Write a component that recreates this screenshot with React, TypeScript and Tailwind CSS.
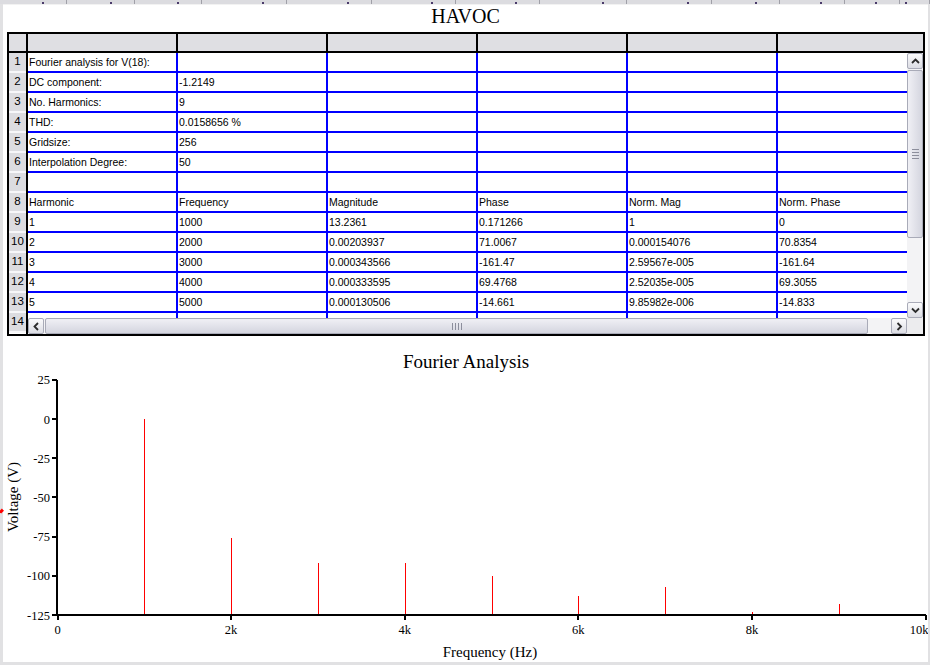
import React from "react";

// rows of the HAVOC sheet, row 14 is cut by the scrollbar
const sheet: string[][] = [
  ["Fourier analysis for V(18):"],
  ["DC component:", "-1.2149"],
  ["No. Harmonics:", "9"],
  ["THD:", "0.0158656 %"],
  ["Gridsize:", "256"],
  ["Interpolation Degree:", "50"],
  [],
  ["Harmonic", "Frequency", "Magnitude", "Phase", "Norm. Mag", "Norm. Phase"],
  ["1", "1000", "13.2361", "0.171266", "1", "0"],
  ["2", "2000", "0.00203937", "71.0067", "0.000154076", "70.8354"],
  ["3", "3000", "0.000343566", "-161.47", "2.59567e-005", "-161.64"],
  ["4", "4000", "0.000333595", "69.4768", "2.52035e-005", "69.3055"],
  ["5", "5000", "0.000130506", "-14.661", "9.85982e-006", "-14.833"],
  ["6", "6000", "2.89795e-005", "58.8081", "2.19939e-006", "58.8079"],
];

const tabWidths = [67, 68, 67, 85, 85, 84, 84, 87, 85, 68, 65, 55, 30];

// harmonic spikes: [kHz, top y in page coords]
const spikes: [number, number][] = [
  [1, 419],
  [2, 538],
  [3, 563],
  [4, 563],
  [5, 576],
  [6, 596],
  [7, 587],
  [8, 612],
  [9, 604],
];

const xOf = (k: number) => 57.5 + 86.8 * k;
const yOf = (v: number) => 419 - (v * 39.2) / 25;

function Chevron({ dir }: { dir: "up" | "down" | "left" | "right" }) {
  const pts = {
    up: "1,5 4.5,1.5 8,5",
    down: "1,1.5 4.5,5 8,1.5",
    left: "5,1 1.5,4.5 5,8",
    right: "1.5,1 5,4.5 1.5,8",
  }[dir];
  const vertical = dir === "up" || dir === "down";
  return (
    <svg width={vertical ? 9 : 7} height={vertical ? 7 : 9}>
      <polyline points={pts} fill="none" stroke="#2c2c2c" strokeWidth="1.8" />
    </svg>
  );
}

function Sheet() {
  return (
    <div className="ml-[4px] flex h-[304px] w-[918px] shrink-0 flex-col border-2 border-black font-['Liberation_Sans',Arial,sans-serif] text-[10.5px] text-black">
      {/* column header row */}
      <div className="flex h-[19px] shrink-0 border-b-2 border-black bg-[#dfdfe3]">
        <div className="w-[19px] shrink-0 border-r-2 border-black" />
        <div className="w-[150px] shrink-0 border-r-2 border-black" />
        <div className="w-[150px] shrink-0 border-r-2 border-black" />
        <div className="w-[150px] shrink-0 border-r-2 border-black" />
        <div className="w-[150px] shrink-0 border-r-2 border-black" />
        <div className="w-[150px] shrink-0 border-r-2 border-black" />
        <div className="min-w-0 flex-1" />
      </div>

      <div className="flex min-h-0 flex-1">
        {/* row numbers */}
        <div className="flex w-[19px] shrink-0 flex-col overflow-hidden border-r-2 border-black">
          {sheet.map((_, i) => (
            <div
              key={i}
              className="flex h-[20px] shrink-0 items-center justify-center border-b-2 border-[#f7f7f9] bg-[#dcdce0] text-[11.5px] leading-none"
            >
              {i + 1}
            </div>
          ))}
        </div>

        <div className="flex min-w-0 flex-1 flex-col">
          <div className="flex h-[265px] shrink-0">
            {/* cells */}
            <div className="flex min-w-0 flex-1 flex-col overflow-hidden">
              {sheet.map((row, i) => (
                <div key={i} className="flex h-[20px] shrink-0 border-b-2 border-[#0000ff]">
                  {[0, 1, 2, 3, 4, 5].map((c) => (
                    <div
                      key={c}
                      className="w-[150px] shrink-0 overflow-hidden whitespace-nowrap border-r-2 border-[#0000ff] pl-[1px] leading-[18px]"
                    >
                      {row[c] ?? ""}
                    </div>
                  ))}
                </div>
              ))}
            </div>
            {/* vertical scrollbar */}
            <div className="flex w-[16px] shrink-0 flex-col bg-[#f3f3f5]">
              <div className="flex h-[16px] items-center justify-center rounded-[2px] border border-[#a9abb8] bg-linear-to-b from-[#fbfbfc] to-[#dcdde4]">
                <Chevron dir="up" />
              </div>
              <div className="mt-[1px] flex h-[168px] flex-col items-center justify-center gap-[2px] rounded-[2px] border border-[#a9abb8] bg-linear-to-r from-[#f0f0f5] to-[#d4d5df]">
                <div className="h-[1px] w-[7px] bg-[#8c8e9c]" />
                <div className="h-[1px] w-[7px] bg-[#8c8e9c]" />
                <div className="h-[1px] w-[7px] bg-[#8c8e9c]" />
                <div className="h-[1px] w-[7px] bg-[#8c8e9c]" />
              </div>
              <div className="flex-1" />
              <div className="flex h-[16px] items-center justify-center rounded-[2px] border border-[#a9abb8] bg-linear-to-b from-[#fbfbfc] to-[#dcdde4]">
                <Chevron dir="down" />
              </div>
            </div>
          </div>

          {/* horizontal scrollbar */}
          <div className="flex h-[16px] shrink-0">
            <div className="flex min-w-0 flex-1 bg-[#f3f3f5]">
              <div className="flex w-[16px] shrink-0 items-center justify-center rounded-[2px] border border-[#a9abb8] bg-linear-to-b from-[#fbfbfc] to-[#dcdde4]">
                <Chevron dir="left" />
              </div>
              <div className="ml-[1px] flex w-[823px] shrink-0 items-center justify-center gap-[2px] rounded-[2px] border border-[#a9abb8] bg-linear-to-b from-[#f0f0f5] to-[#d4d5df]">
                <div className="h-[7px] w-[1px] bg-[#8c8e9c]" />
                <div className="h-[7px] w-[1px] bg-[#8c8e9c]" />
                <div className="h-[7px] w-[1px] bg-[#8c8e9c]" />
                <div className="h-[7px] w-[1px] bg-[#8c8e9c]" />
              </div>
              <div className="flex-1" />
              <div className="flex w-[16px] shrink-0 items-center justify-center rounded-[2px] border border-[#a9abb8] bg-linear-to-b from-[#fbfbfc] to-[#dcdde4]">
                <Chevron dir="right" />
              </div>
            </div>
            <div className="w-[16px] shrink-0 bg-[#ececee]" />
          </div>
        </div>
      </div>
    </div>
  );
}

function Chart() {
  const serif = "'Liberation Serif', 'Times New Roman', serif";
  const yTicks = [25, 0, -25, -50, -75, -100, -125];
  const xTicks = [0, 2, 4, 6, 8, 10];
  return (
    <svg width="925" height="326" viewBox="3 336 925 326" className="block shrink-0">
      <text x="466" y="368" fontFamily={serif} fontSize="19" textAnchor="middle" fill="#000">
        Fourier Analysis
      </text>

      {spikes.map(([k, top]) => (
        <line key={k} x1={Math.round(xOf(k)) + 0.5} x2={Math.round(xOf(k)) + 0.5} y1={top} y2={615} stroke="#ff0000" strokeWidth="1" />
      ))}

      <g stroke="#000" strokeWidth="2" shapeRendering="crispEdges">
        <line x1="57" y1="380" x2="57" y2="616" />
        <line x1="56" y1="615" x2="926" y2="615" />
        {yTicks.map((v) => (
          <line key={v} x1="52" x2="57" y1={Math.round(yOf(v))} y2={Math.round(yOf(v))} />
        ))}
        {xTicks.map((k) => (
          <line key={k} x1={Math.round(xOf(k))} x2={Math.round(xOf(k))} y1="615" y2="620" />
        ))}
      </g>

      {yTicks.map((v) => (
        <text key={v} x="50" y={yOf(v) + 4.5} fontFamily={serif} fontSize="12.5" textAnchor="end" fill="#000">
          {v}
        </text>
      ))}
      {xTicks.map((k) => (
        <text key={k} x={k === 10 ? 919 : xOf(k)} y="634" fontFamily={serif} fontSize="12.5" textAnchor="middle" fill="#000">
          {k === 0 ? "0" : `${k}k`}
        </text>
      ))}

      <text x="490" y="657" fontFamily={serif} fontSize="15" textAnchor="middle" fill="#000">
        Frequency (Hz)
      </text>
      <text transform="translate(18 497) rotate(-90)" fontFamily={serif} fontSize="15" textAnchor="middle" fill="#000">
        Voltage (V)
      </text>
    </svg>
  );
}

export default function App() {
  return (
    <div className="relative flex h-[665px] w-[930px] flex-col overflow-hidden bg-[#e1e1e3]">
      {/* cut-off tab strip */}
      <div className="flex h-[4px] shrink-0 bg-[#dcdce0]">
        {tabWidths.map((w, i) => (
          <div key={i} className="relative shrink-0 border-r border-[#a0a0a8]" style={{ width: w }}>
            <span className="absolute right-[22px] bottom-0 h-[2px] w-[2px] bg-[#4a3a6a]" />
          </div>
        ))}
      </div>

      <div className="flex min-h-0 flex-1 pr-[2px] pb-[3px] pl-[3px]">
        <div className="flex min-w-0 flex-1 flex-col border-t border-[#f2f2f2] bg-white">
          <div className="flex h-[27px] shrink-0 justify-center pt-[1px] font-['Liberation_Serif','Times_New_Roman',serif] text-[20px] leading-[20px] text-black">
            HAVOC
          </div>
          <Sheet />
          <Chart />
        </div>
      </div>

      {/* small red marker on the frame */}
      <span className="absolute top-[509px] left-0 h-[4px] w-[3px] rotate-45 bg-[#ff0000]" />
    </div>
  );
}
